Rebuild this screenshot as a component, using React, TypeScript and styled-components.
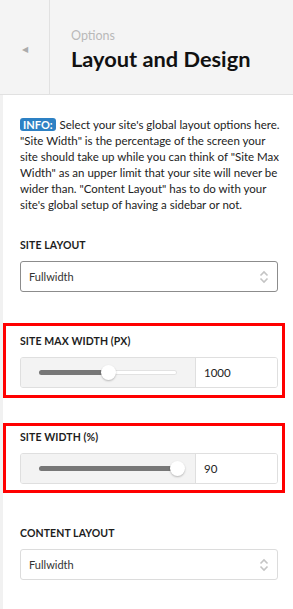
import React from "react";
import styled, { createGlobalStyle } from "styled-components";

const GlobalStyle = createGlobalStyle`
    html, body {
        margin: 0;
        padding: 0;
        background: #fff;
    }
    body {
        font-family: Lato, "Open Sans", Arial, sans-serif;
        color: #1e1e1e;
    }
`;

interface SliderFieldProps {
    value: number;
    ratio: number;
}

// slider + number box, like the customizer range control
const SliderField: React.FC<SliderFieldProps> = ({ value, ratio }) => (
    <RangeGroup>
        <RangeArea>
            <Track>
                <Fill style={{ width: `${ratio * 100}%` }} />
                <Thumb style={{ left: `${ratio * 100}%` }} />
            </Track>
        </RangeArea>
        <NumberBox>{value}</NumberBox>
    </RangeGroup>
);

const SelectBox: React.FC<{ value: string; $strong?: boolean }> = ({ value, $strong }) => (
    <Select $strong={$strong}>
        <span>{value}</span>
        <Arrows viewBox="0 0 10 16" width="10" height="16">
            <path d="M1.5 6.5 L5 3 L8.5 6.5" fill="none" stroke="#c4c4c4" strokeWidth="1.6" />
            <path d="M1.5 9.5 L5 13 L8.5 9.5" fill="none" stroke="#c4c4c4" strokeWidth="1.6" />
        </Arrows>
    </Select>
);

export default function App() {
    return (
        <>
            <GlobalStyle />
            <Page>
                <Header>
                    <BackButton>◀</BackButton>
                    <TitleBlock>
                        <SubTitle>Options</SubTitle>
                        <Title>Layout and Design</Title>
                    </TitleBlock>
                </Header>
                <Content>
                    <Info>
                        <Badge>INFO:</Badge> Select your site's global layout options here.
                        "Site Width" is the percentage of the screen your site should take up
                        while you can think of "Site Max Width" as an upper limit that your site
                        will never be wider than. "Content Layout" has to do with your site's
                        global setup of having a sidebar or not.
                    </Info>

                    <Field $top={21} $pad="0 4px 0 14px">
                        <Label>Site Layout</Label>
                        <SelectBox value="Fullwidth" $strong />
                    </Field>

                    <Field $highlight $top={28} $pad="7px 4px 7px 14px">
                        <Label>Site Max Width (px)</Label>
                        <SliderField value={1000} ratio={0.5} />
                    </Field>

                    <Field $highlight $top={25} $pad="3px 4px 6px 14px">
                        <Label>Site Width (%)</Label>
                        <SliderField value={90} ratio={1} />
                    </Field>

                    <Field $top={29} $pad="0 4px 0 14px">
                        <Label>Content Layout</Label>
                        <SelectBox value="Fullwidth" />
                    </Field>
                </Content>
            </Page>
        </>
    );
}

const Page = styled.div`
    width: 293px;
    min-height: 609px;
    display: flex;
    flex-direction: column;
`;

const Header = styled.header`
    display: flex;
    height: 94px;
    background: #f4f4f4;
    border-bottom: 1px solid #e1e1e1;
`;

const BackButton = styled.div`
    width: 49px;
    border-right: 1px solid #e1e1e1;
    display: flex;
    align-items: center;
    justify-content: center;
    color: #ababab;
    font-size: 8px;
    padding-top: 3px;
`;

const TitleBlock = styled.div`
    display: flex;
    flex-direction: column;
    justify-content: center;
    padding: 6px 0 0 21px;
`;

const SubTitle = styled.div`
    font-size: 12.5px;
    line-height: 18px;
    color: #b9b9b9;
`;

const Title = styled.h1`
    margin: 0;
    font-size: 21.8px;
    line-height: 28px;
    font-weight: 700;
    color: #111;
`;

const Content = styled.main`
    flex: 1;
    border-left: 3px solid #f1f1f1;
    padding: 0 8px 30px 0;
`;

const Info = styled.p`
    margin: 0;
    padding: 22px 4px 0 17px;
    font-size: 11.5px;
    line-height: 16px;
    color: #222;
`;

const Badge = styled.span`
    display: inline-block;
    background: #2d81c4;
    color: #fff;
    font-weight: 700;
    font-size: 11px;
    line-height: 13px;
    padding: 0 3px;
    margin-right: 1px;
    border-radius: 3px;
    vertical-align: 0;
`;

const Field = styled.section<{ $highlight?: boolean; $top: number; $pad: string }>`
    margin-top: ${p => p.$top}px;
    padding: ${p => p.$pad};
    border: 3px solid ${p => (p.$highlight ? "#ff0000" : "transparent")};
`;

const Label = styled.div`
    font-size: 10.5px;
    line-height: 16px;
    font-weight: 700;
    text-transform: uppercase;
    letter-spacing: 0.1px;
    color: #1d1d1d;
    margin-bottom: 8px;
`;

const Select = styled.div<{ $strong?: boolean }>`
    height: 31px;
    box-sizing: border-box;
    border: 1px solid ${p => (p.$strong ? "#8c8c8c" : "#dcdcdc")};
    border-radius: 3px;
    display: flex;
    align-items: center;
    justify-content: space-between;
    padding: 0 8px 0 8px;
    font-size: 11px;
    color: #333;
`;

const Arrows = styled.svg`
    display: block;
`;

const RangeGroup = styled.div`
    display: flex;
    height: 31px;
    box-sizing: border-box;
    border: 1px solid #dfdfdf;
    border-radius: 3px;
    overflow: hidden;
`;

const RangeArea = styled.div`
    width: 174px;
    background: #f3f3f3;
    display: flex;
    align-items: center;
    padding: 0 18px 0 18px;
    box-sizing: border-box;
`;

const Track = styled.div`
    position: relative;
    flex: 1;
    height: 5px;
    border-radius: 3px;
    background: #fff;
    box-shadow: inset 0 0 0 1px #e2e2e2;
`;

const Fill = styled.div`
    height: 100%;
    border-radius: 3px;
    background: #777;
`;

const Thumb = styled.div`
    position: absolute;
    top: 50%;
    width: 15px;
    height: 15px;
    margin: -7.5px 0 0 -7.5px;
    border-radius: 50%;
    background: #fff;
    box-shadow: 0 1px 2px rgba(0, 0, 0, 0.25);
`;

const NumberBox = styled.div`
    flex: 1;
    background: #fff;
    border-left: 1px solid #dfdfdf;
    display: flex;
    align-items: center;
    padding-left: 8px;
    font-size: 11.5px;
    color: #222;
`;
